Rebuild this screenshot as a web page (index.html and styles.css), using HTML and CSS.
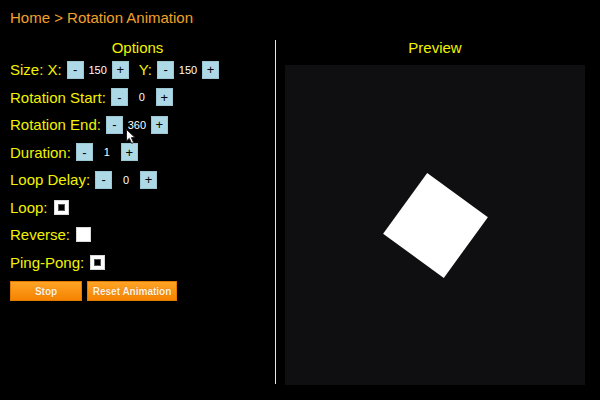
FILE: index.html
```html
<!DOCTYPE html>
<html>
<head>
<meta charset="utf-8">
<link rel="stylesheet" href="styles.css">
</head>
<body>
<div class="crumb">Home &gt; Rotation Animation</div>
<div class="main">
  <div class="options">
    <div class="title">Options</div>
    <div class="row">
      <span class="label">Size: X:</span>
      <span class="btn minus">-</span><span class="val">150</span><span class="btn">+</span>
      <span class="label second">Y:</span>
      <span class="btn minus">-</span><span class="val">150</span><span class="btn">+</span>
    </div>
    <div class="row">
      <span class="label">Rotation Start:</span>
      <span class="btn minus">-</span><span class="val">0</span><span class="btn">+</span>
    </div>
    <div class="row">
      <span class="label">Rotation End:</span>
      <span class="btn minus">-</span><span class="val">360</span><span class="btn">+</span>
    </div>
    <div class="row">
      <span class="label">Duration:</span>
      <span class="btn minus">-</span><span class="val">1</span><span class="btn">+</span>
    </div>
    <div class="row">
      <span class="label">Loop Delay:</span>
      <span class="btn minus">-</span><span class="val">0</span><span class="btn">+</span>
    </div>
    <div class="row">
      <span class="label">Loop:</span>
      <span class="check checked"><span class="dot"></span></span>
    </div>
    <div class="row">
      <span class="label">Reverse:</span>
      <span class="check"></span>
    </div>
    <div class="row">
      <span class="label">Ping-Pong:</span>
      <span class="check checked"><span class="dot"></span></span>
    </div>
    <div class="actions">
      <button class="action stop">Stop</button>
      <button class="action reset">Reset Animation</button>
    </div>
  </div>
  <div class="preview-col">
    <div class="title">Preview</div>
    <div class="preview">
      <div class="square"></div>
    </div>
  </div>
</div>
<svg class="cursor" width="12" height="16" viewBox="0 0 12 16">
  <path d="M0.5 0.5 L0.5 12 L3.3 9.4 L5.6 14.4 L7.6 13.5 L5.4 8.6 L9 8.6 Z" fill="#ffffff" stroke="#222" stroke-width="1"/>
</svg>
</body>
</html>
```

FILE: styles.css
```css
html, body {
  margin: 0;
  padding: 0;
  background: #000;
  width: 600px;
  height: 400px;
  overflow: hidden;
  font-family: "Liberation Sans", Arial, sans-serif;
  position: relative;
}

.crumb {
  height: 40px;
  box-sizing: border-box;
  padding: 9px 10px 0;
  font-size: 15px;
  color: #f2a12a;
}

.main {
  display: flex;
}

.options {
  width: 255px;
  padding: 0 10px;
  height: 344px;
  border-right: 1px solid #e6e6e6;
}

.title {
  font-size: 15px;
  color: #f2f200;
  text-align: center;
  line-height: 16px;
  height: 16px;
}

.row {
  display: flex;
  align-items: center;
  height: 27.5px;
}

.label {
  font-size: 15px;
  color: #f2f200;
  white-space: nowrap;
}

.label.second {
  margin-left: 10px;
}

.btn {
  width: 17px;
  height: 18px;
  box-sizing: border-box;
  background: #add8e6;
  border: 1px solid #9cc6d4;
  display: flex;
  align-items: center;
  justify-content: center;
  font-size: 13px;
  color: #000;
}

.btn.minus {
  margin-left: 5px;
}

.val {
  width: 28px;
  text-align: center;
  font-size: 11px;
  color: #fff;
}

.check {
  margin-left: 6px;
  width: 15px;
  height: 15px;
  box-sizing: border-box;
  background: #fff;
  border: 1px solid #d8d8d8;
  display: flex;
  align-items: center;
  justify-content: center;
}

.dot {
  width: 7px;
  height: 7px;
  box-sizing: border-box;
  background: #000;
  border: 1px solid #555;
}

.actions {
  display: flex;
  gap: 5px;
  margin-top: 5px;
}

.action {
  height: 20px;
  margin: 0;
  padding: 0;
  border: 1px solid #e07a00;
  background: linear-gradient(#ffa426, #f58300);
  color: #fff2e0;
  font-family: "Liberation Sans", Arial, sans-serif;
  font-size: 10px;
  font-weight: bold;
  text-shadow: 0 0 1px rgba(150, 70, 0, 0.5);
}

.stop {
  width: 72px;
}

.reset {
  width: 90px;
}

.preview-col {
  padding-left: 9px;
  width: 300px;
}

.preview-col .title {
  height: 25px;
}

.preview {
  width: 300px;
  height: 320px;
  background: #0f0e11;
  display: flex;
  align-items: center;
  justify-content: center;
}

.square {
  width: 75px;
  height: 75px;
  background: #fff;
  transform: rotate(36deg);
}

.cursor {
  position: absolute;
  left: 126px;
  top: 129px;
}
```
